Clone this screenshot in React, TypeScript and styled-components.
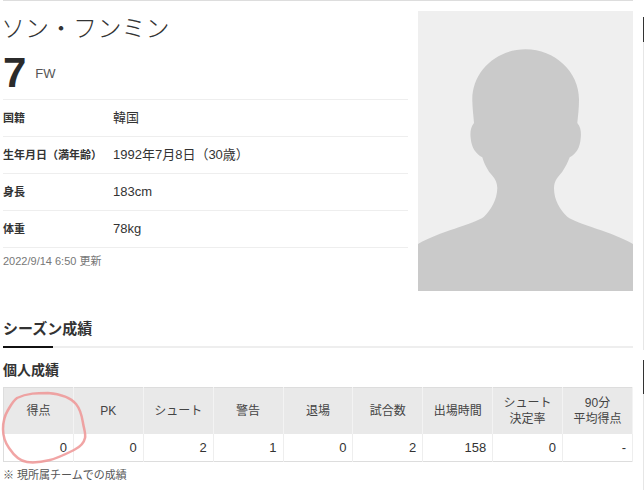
import styled, { createGlobalStyle } from "styled-components";

const GlobalStyle = createGlobalStyle`
  html, body {
    margin: 0;
    padding: 0;
    background: #fff;
    overflow: hidden;
  }
  body {
    font-family: "Liberation Sans", "Noto Sans CJK JP", sans-serif;
    color: #333;
  }
`;

const Page = styled.div`
  position: relative;
  width: 644px;
  height: 490px;
  box-sizing: border-box;
  padding-left: 3px;
`;

const Content = styled.div`
  width: 630px;
  border-top: 1px solid #ddd;
`;

const Profile = styled.section`
  display: flex;
  gap: 10px;
  padding-top: 10px;
`;

const Info = styled.div`
  width: 405px;
`;

const Name = styled.h1`
  margin: 0 0 0 -2px;
  height: 36px;
  font-size: 24px;
  line-height: 36px;
  font-weight: 300;
  color: #333;
`;

const NumberRow = styled.div`
  display: flex;
  align-items: center;
  height: 52px;
  gap: 9px;
`;

const ShirtNumber = styled.span`
  font-size: 42px;
  font-weight: 700;
  line-height: 52px;
  color: #2b2b2b;
`;

const Position = styled.span`
  font-size: 13px;
  color: #555;
`;

const InfoRow = styled.div`
  display: flex;
  align-items: center;
  height: 36px;
  border-top: 1px solid #eee;
`;

const InfoLabel = styled.span`
  width: 110px;
  font-size: 11px;
  line-height: 14px;
  margin-top: -1px;
  font-weight: 700;
`;

const InfoValue = styled.span`
  font-size: 13px;
  line-height: 16px;
  margin-top: -1px;
`;

const Updated = styled.div`
  border-top: 1px solid #eee;
  padding-top: 6px;
  font-size: 11px;
  line-height: 14px;
  color: #777;
`;

const Portrait = styled.svg`
  display: block;
  width: 215px;
  height: 280px;
  flex: none;
  background: #efefef;
`;

const SectionTitle = styled.h2`
  position: relative;
  margin: 28px 0 0;
  height: 27px;
  font-size: 15px;
  line-height: 19px;
  font-weight: 700;
  border-bottom: 2px solid #eee;

  &::after {
    content: "";
    position: absolute;
    left: 0;
    bottom: -2px;
    width: 50px;
    height: 2px;
    background: #111;
  }
`;

const SubTitle = styled.h3`
  margin: 12px 0 7px;
  font-size: 14px;
  line-height: 20px;
  font-weight: 700;
`;

const Table = styled.table`
  width: 630px;
  table-layout: fixed;
  border-collapse: collapse;
  border: 1px solid #ddd;
  font-size: 12px;
`;

const HeadCell = styled.th`
  height: 46px;
  padding: 0;
  background: #e9e9e9;
  border-right: 1px solid #f3f3f3;
  font-weight: 400;
  line-height: 16px;
  text-align: center;
  color: #444;
`;

const ValueCell = styled.td`
  height: 27px;
  padding: 0 6px 0 0;
  border-right: 1px solid #eee;
  font-size: 13px;
  text-align: right;
  color: #333;
`;

const Note = styled.p`
  margin: 6px 0 0;
  font-size: 11px;
  line-height: 14px;
  color: #555;
`;

const Circle = styled.svg`
  position: absolute;
  left: 0;
  top: 385px;
  width: 92px;
  height: 82px;
  pointer-events: none;
`;

const Strip = styled.div`
  position: absolute;
  top: 0;
  right: 0;
  width: 1px;
  height: 490px;
  display: flex;
  flex-direction: column;
`;

const StripPart = styled.div<{ $h: number; $color: string }>`
  height: ${(p) => p.$h}px;
  background: ${(p) => p.$color};
`;

const details = [
  { label: "国籍", value: "韓国" },
  { label: "生年月日（満年齢）", value: "1992年7月8日（30歳）" },
  { label: "身長", value: "183cm" },
  { label: "体重", value: "78kg" },
];

const stats: { head: string[]; value: string }[] = [
  { head: ["得点"], value: "0" },
  { head: ["PK"], value: "0" },
  { head: ["シュート"], value: "2" },
  { head: ["警告"], value: "1" },
  { head: ["退場"], value: "0" },
  { head: ["試合数"], value: "2" },
  { head: ["出場時間"], value: "158" },
  { head: ["シュート", "決定率"], value: "0" },
  { head: ["90分", "平均得点"], value: "-" },
];

const strip = [
  { h: 17, color: "#fff" },
  { h: 25, color: "#333" },
  { h: 308, color: "#e6e6e6" },
  { h: 10, color: "#fff" },
  { h: 34, color: "#333" },
  { h: 96, color: "#e6e6e6" },
];

function App() {
  return (
    <Page>
      <GlobalStyle />
      <Content>
        <Profile>
          <Info>
            <Name>ソン・フンミン</Name>
            <NumberRow>
              <ShirtNumber>7</ShirtNumber>
              <Position>FW</Position>
            </NumberRow>
            {details.map((row) => (
              <InfoRow key={row.label}>
                <InfoLabel>{row.label}</InfoLabel>
                <InfoValue>{row.value}</InfoValue>
              </InfoRow>
            ))}
            <Updated>2022/9/14 6:50 更新</Updated>
          </Info>
          <Portrait viewBox="0 0 215 280">
            <path
              fill="#cacaca"
              d="M107.7 38.3C78 38.3 54 61 54.3 89C54.4 97 55.5 105 56 112C52.5 116 52 122 52.7 127.3C53.5 137 58 143 64.3 146.3C65.5 151 68 156 71 160.7C75 165.5 79.3 169 79.3 177.3C79 189 73 199 66 205.7C56 213 20 221 0 233V280H215V233C195 221 159 213 149.3 205.7C142 199 136 189 136 177.3C136 169 140.5 165.5 144.3 160.7C147.5 156 150 151 151.7 146.3C158 143 162 137 162.7 127.3C163.3 122 163 116 159.3 112C160 105 161 97 161 89C161.4 61 137 38.3 107.7 38.3Z"
            />
          </Portrait>
        </Profile>

        <SectionTitle>シーズン成績</SectionTitle>
        <SubTitle>個人成績</SubTitle>
        <Table>
          <thead>
            <tr>
              {stats.map((col) => (
                <HeadCell key={col.head.join("")}>
                  {col.head.map((line) => (
                    <div key={line}>{line}</div>
                  ))}
                </HeadCell>
              ))}
            </tr>
          </thead>
          <tbody>
            <tr>
              {stats.map((col) => (
                <ValueCell key={col.head.join("")}>{col.value}</ValueCell>
              ))}
            </tr>
          </tbody>
        </Table>
        <Note>※ 現所属チームでの成績</Note>
      </Content>

      {/* hand-drawn marker round the first column */}
      <Circle viewBox="0 0 92 82">
        <path
          fill="none"
          stroke="#ee9595"
          strokeOpacity="0.85"
          strokeWidth="2.5"
          strokeLinecap="round"
          d="M17 13C27 8 38 8 48 8C60 9 70 12 76 19C81 25 82 32 83 38C84 44 86 49 85 53C84 58 80 62 74 65C66 69 58 73 50 75C42 77 34 78 27 77C19 76 13 69 9 63C4 56 3 50 3 44C3 36 5 30 8 25C11 20 13 16 17 13Z"
        />
      </Circle>

      <Strip>
        {strip.map((part, i) => (
          <StripPart key={i} $h={part.h} $color={part.color} />
        ))}
      </Strip>
    </Page>
  );
}

export default App;
